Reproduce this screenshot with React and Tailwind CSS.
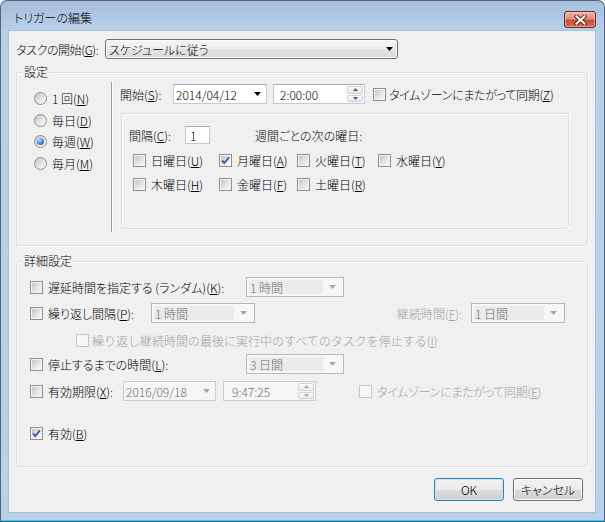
import React from 'react';

const M = ({ t, k, after = '' }) => (
  <>
    {t}(<span className="underline underline-offset-[1px]">{k}</span>){after}
  </>
);

function Check({ checked = false, disabled = false }) {
  return (
    <span
      className={
        disabled
          ? 'relative block w-[13px] h-[13px] shrink-0 border border-[#c6c6c6] bg-[#f6f6f6]'
          : 'relative block w-[13px] h-[13px] shrink-0 border border-[#8e8f8f] bg-[#f4f4f4] p-[1px]'
      }
    >
      {!disabled && (
        <span className="block w-full h-full bg-gradient-to-br from-[#c4c4c4] via-[#e2e2e2] to-[#f8f8f8]" />
      )}
      {checked && (
        <svg className="absolute left-0 top-0" width="11" height="11" viewBox="0 0 11 11">
          <path d="M2 5.4 L4.3 8.1 L9 2.2" fill="none" stroke="#3b56a3" strokeWidth="1.8" />
        </svg>
      )}
    </span>
  );
}

function Radio({ checked = false }) {
  return (
    <span className="flex items-center justify-center w-[13px] h-[13px] shrink-0 rounded-full border border-[#8e8f8f] bg-gradient-to-br from-[#c2c2c2] via-[#e4e4e4] to-[#fbfbfb]">
      {checked && (
        <span className="block w-[7px] h-[7px] rounded-full bg-[radial-gradient(circle_at_35%_30%,#c3e3fc_0%,#4c8fdf_45%,#1a4aa0_100%)]" />
      )}
    </span>
  );
}

function Arrow({ color = '#000' }) {
  return (
    <svg width="7" height="4" viewBox="0 0 7 4" className="shrink-0">
      <path d="M0 0H7L3.5 4Z" fill={color} />
    </svg>
  );
}

function Spinner({ disabled = false }) {
  const c = disabled ? '#a8a8a8' : '#3d5f9c';
  return (
    <div className="w-[16px] h-full flex flex-col gap-[1px] mr-[1px] py-[1px] shrink-0">
      <div className="flex-1 flex items-center justify-center rounded-[2px] border border-[#d2d2d2] bg-gradient-to-b from-[#fbfbfb] to-[#e9e9e9]">
        <svg width="5" height="3" viewBox="0 0 5 3">
          <path d="M2.5 0L5 3H0Z" fill={c} />
        </svg>
      </div>
      <div className="flex-1 flex items-center justify-center rounded-[2px] border border-[#d2d2d2] bg-gradient-to-b from-[#fbfbfb] to-[#e9e9e9]">
        <svg width="5" height="3" viewBox="0 0 5 3">
          <path d="M0 0H5L2.5 3Z" fill={c} />
        </svg>
      </div>
    </div>
  );
}

function DisCombo({ value, className }) {
  return (
    <div className={className}>
      <div className="h-full w-full flex items-stretch border border-[#b5b8bc] bg-[#f7f7f7] p-[2px]">
        <div className="flex-1 flex items-center bg-[#ebebeb] pl-[1px] text-[#6d6d6d]">{value}</div>
        <div className="w-[18px] flex items-center justify-center">
          <Arrow color="#a6a6a6" />
        </div>
      </div>
    </div>
  );
}

function Group({ label, className, children }) {
  return (
    <div className={className}>
      <span className="absolute left-[5px] top-[-9px] px-[2px] bg-[#f0f0f0] leading-[15px]">{label}</span>
      {children}
    </div>
  );
}

function CloseBtn() {
  return (
    <div className="w-[32px] h-[17px] mt-[1px] rounded-[3px] border border-[#6b2b25] bg-[linear-gradient(to_bottom,#eab0a3_0%,#de8f7e_45%,#c8503c_55%,#cf6a55_100%)] shadow-[inset_0_0_0_1px_rgba(255,230,220,0.45)] flex items-center justify-center shrink-0">
      <svg width="13" height="10" viewBox="0 0 13 10">
        <path d="M2.5 1.5 L10.5 8.5 M10.5 1.5 L2.5 8.5" stroke="#5a1f18" strokeWidth="3.8" strokeLinecap="square" />
        <path d="M2.5 1.5 L10.5 8.5 M10.5 1.5 L2.5 8.5" stroke="#fff" strokeWidth="2" strokeLinecap="square" />
      </svg>
    </div>
  );
}

const days = [
  ['日曜日', 'U', false],
  ['月曜日', 'A', true],
  ['火曜日', 'T', false],
  ['水曜日', 'Y', false],
  ['木曜日', 'H', false],
  ['金曜日', 'F', false],
  ['土曜日', 'R', false],
];

export default function App() {
  return (
    <div className="w-[605px] h-[522px] font-['Noto_Sans_CJK_JP','Noto_Sans',sans-serif] font-light text-[12px] leading-[15px] text-black whitespace-nowrap [font-feature-settings:'palt']">
      <div className="w-full h-full flex flex-col rounded-t-[7px] border border-[#54667b] border-b-[#1f6f8c] bg-[linear-gradient(to_bottom,#a5bedb_0px,#b8cfe8_29px,#bad1ea_100%)] overflow-hidden">
        {/* title bar */}
        <div className="h-[29px] shrink-0 flex items-start pt-[9px] pl-[13px] pr-[8px]">
          <span className="flex-1">トリガーの編集</span>
          <CloseBtn />
        </div>

        {/* client area */}
        <div className="h-[483px] shrink-0 ml-[7px] mr-[8px] bg-[#f0f0f0] shadow-[inset_0_0_0_1px_#aebfd3] flex flex-col">
          {/* task start */}
          <div className="h-[20px] mt-[9px] flex items-center pl-[8px]">
            <span className="w-[89px] tracking-[-0.4px]">
              <M t="タスクの開始" k="G" after=":" />
            </span>
            <div className="w-[293px] h-[20px] flex items-center rounded-[3px] border border-[#707070] bg-[linear-gradient(to_bottom,#f5f5f5_0%,#eeeeee_50%,#e3e3e3_51%,#dcdcdc_100%)] pl-[3px] pr-[4px] shadow-[inset_0_0_0_1px_#fbfbfb]">
              <span className="flex-1">スケジュールに従う</span>
              <Arrow />
            </div>
          </div>

          {/* 設定 */}
          <Group
            label="設定"
            className="relative mt-[13px] ml-[8px] w-[572px] h-[174px] shrink-0 flex rounded-[3px] border border-[#d5dfe5] shadow-[inset_1px_1px_0_#fff,1px_1px_0_#fff]"
          >
            <div className="w-[94px] pl-[17px] pt-[15px] flex flex-col">
              <div className="h-[21.5px] flex items-center gap-[5px]">
                <Radio />
                <span>1 回(<span className="underline underline-offset-[1px]">N</span>)</span>
              </div>
              <div className="h-[21.5px] flex items-center gap-[5px]">
                <Radio />
                <span><M t="毎日" k="D" /></span>
              </div>
              <div className="h-[21.5px] flex items-center gap-[5px]">
                <Radio checked />
                <span><M t="毎週" k="W" /></span>
              </div>
              <div className="h-[21.5px] flex items-center gap-[5px]">
                <Radio />
                <span><M t="毎月" k="M" /></span>
              </div>
            </div>
            <div className="mt-[9px] h-[150px] w-[2px] border-l border-l-[#a0a0a0] border-r border-r-white" />
            <div className="flex-1 pl-[7px] flex flex-col">
              <div className="pt-[11px] flex items-center">
                <span className="w-[53px]"><M t="開始" k="S" after=":" /></span>
                <div className="w-[94px] h-[20px] flex items-center bg-white border border-[#c5c9d1] border-t-[#abadb3] pl-[2px] pr-[5px]">
                  <span className="flex-1">2014/04/12</span>
                  <Arrow />
                </div>
                <div className="ml-[6px] w-[92px] h-[20px] flex items-stretch bg-white border border-[#c5c9d1] border-t-[#abadb3]">
                  <span className="flex-1 flex items-center pl-[6px]">2:00:00</span>
                  <Spinner />
                </div>
                <span className="ml-[8px]"><Check /></span>
                <span className="ml-[3px] tracking-[-0.3px]"><M t="タイムゾーンにまたがって同期" k="Z" /></span>
              </div>

              <div className="mt-[9px] ml-[1px] w-[448px] h-[116px] rounded-[3px] border border-[#d5dfe5] shadow-[inset_1px_1px_0_#fff,1px_1px_0_#fff] flex flex-col">
                <div className="mt-[12px] pl-[7px] h-[18px] flex items-center">
                  <span className="w-[56px]"><M t="間隔" k="C" after=":" /></span>
                  <div className="w-[25px] h-[18px] flex items-center bg-white border border-[#c5c9d1] border-t-[#abadb3] pl-[4px]">1</div>
                  <span className="ml-[45px]">週間ごとの次の曜日:</span>
                </div>
                <div className="mt-[6px] pl-[11px] grid grid-cols-[86px_78px_81px_auto] gap-y-[4px]">
                  {days.map(([d, k, c]) => (
                    <div key={d} className="h-[20px] flex items-center gap-[5px]">
                      <Check checked={c} />
                      <span><M t={d} k={k} /></span>
                    </div>
                  ))}
                </div>
              </div>
            </div>
          </Group>

          {/* 詳細設定 */}
          <Group
            label="詳細設定"
            className="relative mt-[15px] ml-[8px] w-[572px] h-[206px] shrink-0 flex flex-col pl-[13px] rounded-[3px] border border-[#d5dfe5] shadow-[inset_1px_1px_0_#fff,1px_1px_0_#fff]"
          >
            <div className="mt-[15px] h-[20px] flex items-center">
              <div className="w-[216px] flex items-center gap-[5px]">
                <Check />
                <span><M t="遅延時間を指定する (ランダム)" k="K" after=":" /></span>
              </div>
              <DisCombo value="1 時間" className="w-[98px] h-[20px]" />
            </div>
            <div className="mt-[6px] h-[20px] flex items-center">
              <div className="w-[121px] flex items-center gap-[5px]">
                <Check />
                <span><M t="繰り返し間隔" k="P" after=":" /></span>
              </div>
              <DisCombo value="1 時間" className="w-[104px] h-[20px]" />
              <span className="ml-[142px] w-[74px] text-[#a0a0a0]"><M t="継続時間" k="F" after=":" /></span>
              <DisCombo value="1 日間" className="w-[94px] h-[20px]" />
            </div>
            <div className="mt-[7px] h-[20px] pl-[46px] flex items-center gap-[3px]">
              <Check disabled />
              <span className="text-[#a0a0a0] [font-feature-settings:normal]"><M t="繰り返し継続時間の最後に実行中のすべてのタスクを停止する" k="I" /></span>
            </div>
            <div className="mt-[4px] h-[20px] flex items-center">
              <div className="w-[216px] flex items-center gap-[5px]">
                <Check />
                <span><M t="停止するまでの時間" k="L" after=":" /></span>
              </div>
              <DisCombo value="3 日間" className="w-[98px] h-[20px]" />
            </div>
            <div className="mt-[7px] h-[20px] flex items-center">
              <div className="w-[93px] flex items-center gap-[5px]">
                <Check />
                <span><M t="有効期限" k="X" after=":" /></span>
              </div>
              <div className="w-[93px] h-[20px] flex items-center bg-[#f5f5f5] border border-[#c9ccd2] pl-[2px] pr-[5px] text-[#6d6d6d]">
                <span className="flex-1">2016/09/18</span>
                <Arrow color="#a6a6a6" />
              </div>
              <div className="ml-[7px] w-[93px] h-[20px] flex items-stretch bg-[#f5f5f5] border border-[#c9ccd2] text-[#6d6d6d]">
                <span className="flex-1 flex items-center pl-[8px]">9:47:25</span>
                <Spinner disabled />
              </div>
              <span className="ml-[43px]"><Check disabled /></span>
              <span className="ml-[5px] text-[#a0a0a0] tracking-[-0.3px]"><M t="タイムゾーンにまたがって同期" k="E" /></span>
            </div>
            <div className="mt-[22px] h-[20px] flex items-center gap-[5px]">
              <Check checked />
              <span><M t="有効" k="B" /></span>
            </div>
          </Group>

          {/* buttons */}
          <div className="mt-[11px] pr-[13px] flex justify-end gap-[9px]">
            <div className="w-[70px] h-[23px] flex items-center justify-center rounded-[3px] border border-[#3c7fb1] bg-[linear-gradient(to_bottom,#f2f2f2_0%,#ebebeb_50%,#dddddd_51%,#cfcfcf_100%)] shadow-[inset_0_0_0_1px_#bfe4f7]">
              OK
            </div>
            <div className="w-[70px] h-[23px] flex items-center justify-center rounded-[3px] border border-[#707070] bg-[linear-gradient(to_bottom,#f2f2f2_0%,#ebebeb_50%,#dddddd_51%,#cfcfcf_100%)] shadow-[inset_0_0_0_1px_#fcfcfc]">
              キャンセル
            </div>
          </div>
        </div>

        <div className="h-[7px] shrink-0" />
        <div className="h-[1px] shrink-0 bg-[#3fc8ec]" />
      </div>
    </div>
  );
}
